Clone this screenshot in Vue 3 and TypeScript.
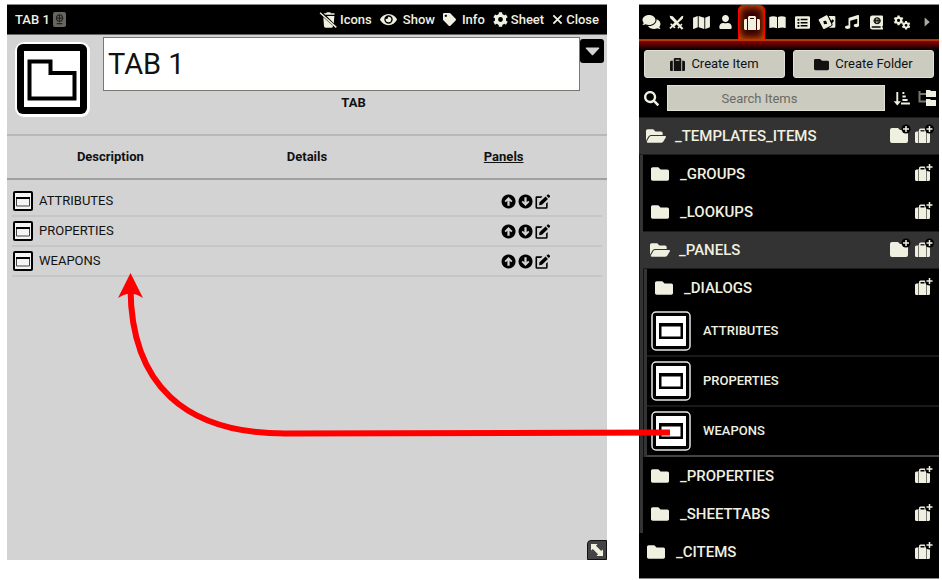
<script setup lang="ts">
import { h, ref, type FunctionalComponent } from 'vue'

interface Glyph {
  box: string
  d: string
  stroke?: number
}

const folder =
  'M464 128H272l-64-64H48C21.5 64 0 85.500 0 112v288c0 26.500 21.500 48 48 48h416c26.500 0 48-21.500 48-48V176c0-26.500-21.500-48-48-48z'

/* Outline of a cog wheel centred on cx, cy, with a round hole in the middle. */
function cog(cx: number, cy: number, r: number, teeth: number): string {
  const points: string[] = []
  const step = (Math.PI * 2) / teeth
  for (let i = 0; i < teeth; i++) {
    const a = i * step - Math.PI / 2
    const marks: [number, number][] = [
      [-0.3, 0.76],
      [-0.22, 1],
      [0.22, 1],
      [0.3, 0.76],
    ]
    for (const [offset, scale] of marks) {
      const t = a + offset * step
      points.push(`${(cx + Math.cos(t) * r * scale).toFixed(1)} ${(cy + Math.sin(t) * r * scale).toFixed(1)}`)
    }
  }
  const k = r * 0.32
  return `M${points.join('L')}ZM${cx - k} ${cy}a${k} ${k} 0 1 0 ${2 * k} 0a${k} ${k} 0 1 0 ${-2 * k} 0z`
}

const glyphs: Record<string, Glyph> = {
  folder: { box: '0 0 512 512', d: folder },
  folderOpen: {
    box: '0 0 576 512',
    d: 'M572.7 292.100L500.300 416.200A64 64 0 0 1 445 448H45c-18.500 0-30-20.100-20.700-36.100l72.400-124.100A64 64 0 0 1 152 256h400c18.500 0 30 20.100 20.700 36.100zM152 224h328v-48c0-26.500-21.500-48-48-48H272l-64-64H48C21.500 64 0 85.500 0 112v278l69-118.400C86.200 242.300 118 224 152 224z',
  },
  suitcase: {
    box: '0 0 512 512',
    d: 'M128 480h256V80c0-26.500-21.500-48-48-48H176c-26.500 0-48 21.500-48 48v400zm64-384h128v32H192V96zm320 80v256c0 26.500-21.500 48-48 48h-48V128h48c26.500 0 48 21.500 48 48zM96 480H48c-26.500 0-48-21.500-48-48V176c0-26.500 21.500-48 48-48h48v352z',
  },
  comments: {
    box: '0 0 576 512',
    d: 'M416 192c0-88.400-93.100-160-208-160S0 103.600 0 192c0 34.300 14.100 65.900 38 92-13.400 30.200-35.500 54.200-35.800 54.500-2.200 2.300-2.800 5.700-1.500 8.700S4.800 352 8 352c36.600 0 66.900-12.300 88.700-25 32.200 15.700 70.300 25 111.300 25 114.900 0 208-71.600 208-160zm122 220c23.900-26 38-57.700 38-92 0-66.900-53.500-124.200-129.300-148.100.9 6.600 1.300 13.300 1.300 20.100 0 105.900-107.700 192-240 192-10.800 0-21.300-.8-31.700-1.900C207.800 439.600 281.800 480 368 480c41 0 79.100-9.200 111.300-25 21.800 12.700 52.100 25 88.700 25 3.200 0 6.100-1.900 7.300-4.800 1.300-2.900.7-6.300-1.500-8.700-.3-.3-22.400-24.200-35.800-54.500z',
  },
  swords: {
    box: '0 0 24 24',
    d: 'M1 1l5 1 7 7.500 7-7.500 3-1-1 5-7.300 6.500 3.300 3.200 2-2 1.500 1.500-2 2.300 3.500 3.500-2.500 2.500-3.500-3.500-2.200 2-1.500-1.500 2-2-3.300-3.300-3.300 3.300 2 2L8.200 21 6 19l-3.500 3.500L.5 20.500 4 17l-2-2.300L3.500 13.200l2 2L9 12 2 5z',
  },
  map: {
    box: '0 0 576 512',
    d: 'M0 117.700v346.300c0 11.300 11.400 19 22 14.800L160 416V32L20.100 88A32 32 0 0 0 0 117.700zM192 416l192 64V96L192 32v384zM554 33.200L416 96v384l139.900-56A32 32 0 0 0 576 394.300V48c0-11.300-11.400-19-22-14.800z',
  },
  user: {
    box: '0 0 448 512',
    d: 'M224 256c70.700 0 128-57.300 128-128S294.700 0 224 0 96 57.300 96 128s57.300 128 128 128zm89.600 32h-16.700c-22.200 10.200-46.900 16-72.900 16s-50.600-5.800-72.900-16h-16.700C60.200 288 0 348.200 0 422.400V464c0 26.500 21.500 48 48 48h352c26.500 0 48-21.500 48-48v-41.600c0-74.200-60.200-134.400-134.400-134.400z',
  },
  book: {
    box: '0 0 24 22',
    d: 'M0 3q6-2.500 11.300 0v16.500q-5-2.300-11.300-.5zM12.700 3q5.300-2.500 11.300 0v16q-6-1.800-11.300.5z',
  },
  list: {
    box: '0 0 24 24',
    d: 'M2 2h20q2 0 2 2v16q0 2-2 2H2q-2 0-2-2V4q0-2 2-2zM4 6v3h3V6zM9 6v2.500h11V6zM4 11v3h3v-3zM9 11v2.500h11V11zM4 16v3h3v-3zM9 16v2.500h11V16z',
  },
  cards: {
    box: '0 0 26 24',
    d: 'M1 8L12 2q1-.5 1.700.5l6 13q.5 1-.5 1.600L9 22.500q-1 .5-1.600-.5L.6 9.500Q0 8.500 1 8zM7.500 10.500l1 5 5-1-2-4.500zM15.500 3H24q1.500 0 1.500 1.500V19q0 1.500-1.500 1.500h-8l4-2.500q2-1 1.300-2.700l-.6-1.300 3-4-2.700-2-1.500 2z',
  },
  music: {
    box: '0 0 512 512',
    d: 'M470.400 1.500L150.400 96A32 32 0 0 0 128 126.500v261.400A139 139 0 0 0 96 384c-53 0-96 28.700-96 64s43 64 96 64 96-28.700 96-64V214.300l256-75v184.600a138 138 0 0 0-32-3.900c-53 0-96 28.700-96 64s43 64 96 64 96-28.700 96-64V32a32 32 0 0 0-41.600-30.500z',
  },
  atlas: {
    box: '0 0 22 24',
    d: 'M4 0h16q2 0 2 2v14.500q0 1-1 1.500v3h1v3H4q-4 0-4-4V4q0-4 4-4zM4 18.500q-1.500 0-1.500 1.200T4 21h14v-2.500zM12 3a6 6 0 1 0 .1 0zM11.300 4.500v3.700H9.500q.3-2.700 1.800-3.700zM12.700 4.500q1.500 1 1.800 3.700h-1.800zM8 6v2.200H7.300zM16 6l.7 2.200H16zM7.300 9.700H8V12zM9.500 9.700h1.800v3.800q-1.500-1-1.800-3.800zM12.700 9.700h1.800q-.3 2.800-1.800 3.800zM16 9.700h.7L16 12z',
  },
  globe: {
    box: '0 0 12 12',
    d: 'M6 1a3.500 3.500 0 1 0 .1 0zM2.500 4.500h7M6 1v7M3 10.500h6',
    stroke: 1.2,
  },
  cogs: { box: '0 0 28 24', d: cog(8.5, 8.5, 8, 6) + cog(20.5, 16.5, 7, 6) },
  cog: { box: '0 0 24 24', d: cog(12, 12, 12, 6) },
  caret: { box: '0 0 10 16', d: 'M1 1.500v13q.3 1 1.200.3L9 8.500q.5-.5 0-1L2.200 1.200Q1.300.5 1 1.500z' },
  caretDown: { box: '0 0 16 10', d: 'M1 .5h14q1 .3.400 1.200L8.700 9q-.7.600-1.400 0L.6 1.700Q0 .8 1 .5z' },
  search: {
    box: '0 0 512 512',
    d: 'M505 442.700L405.300 343c-4.500-4.500-10.600-7-17-7H372c27.600-35.300 44-79.700 44-128C416 93.100 322.900 0 208 0S0 93.100 0 208s93.100 208 208 208c48.300 0 92.700-16.400 128-44v16.300c0 6.400 2.500 12.500 7 17l99.700 99.700c9.400 9.400 24.600 9.400 33.900 0l28.300-28.300c9.400-9.400 9.400-24.600.1-34zM208 336c-70.700 0-128-57.200-128-128 0-70.700 57.200-128 128-128 70.700 0 128 57.200 128 128 0 70.700-57.200 128-128 128z',
  },
  sort: {
    box: '0 0 18 16',
    d: 'M3.500 1h2v10h2.800L4.500 15.500.7 11h2.800zM10 1h2v2.300h-2zM10 4.800h3.500V7H10zM10 8.500h5.500v2.200H10zM8.500 12.200H18v2.300H8.500z',
  },
  tree: {
    box: '0 0 18 16',
    d: 'M8 0h4l1 1h5v6H8zM8 9h4l1 1h5v6H8z',
  },
  eye: {
    box: '0 0 576 512',
    d: 'M572.500 241.400C518.300 135.600 410.900 64 288 64S57.700 135.600 3.500 241.400a32 32 0 0 0 0 29.200C57.700 376.400 165.100 448 288 448s230.300-71.600 284.500-177.400a32 32 0 0 0 0-29.200zM288 400a144 144 0 1 1 144-144 144 144 0 0 1-144 144zm0-240a95 95 0 0 0-25.300 3.800 48 48 0 0 1-66.900 66.900A96 96 0 1 0 288 160z',
  },
  tag: {
    box: '0 0 512 512',
    d: 'M0 252.100V48C0 21.500 21.500 0 48 0h204.100a48 48 0 0 1 34 14l211.800 212c18.700 18.700 18.700 49 0 67.800L293.800 498c-18.700 18.700-49 18.700-67.900 0L14 286A48 48 0 0 1 0 252.100zM112 64c-26.500 0-48 21.500-48 48s21.500 48 48 48 48-21.500 48-48-21.500-48-48-48z',
  },
  trashOff: {
    box: '0 0 18 16',
    d: 'M.6 1.200L1.500.2 17.800 14.800l-1 1.200zM4.500 1.200H7L8 .3h3l1 .9h3.500v1.500H6.200zM7.700 4h7.700l-.6 7.200zM4.300 5.200l9.800 8.900q-.3 1.600-1.500 1.600H6.500q-1.300 0-1.500-1.400z',
  },
  close: { box: '0 0 12 12', d: 'M1.500 1.500l9 9M10.500 1.500l-9 9', stroke: 2 },
  up: {
    box: '0 0 16 16',
    d: 'M8 .5a7.500 7.500 0 1 0 .1 0zM8 3.200l4.200 4.300-1.300 1.300-1.700-1.600V12.500H6.800V7.200L5.100 8.800 3.800 7.500z',
  },
  down: {
    box: '0 0 16 16',
    d: 'M8 .5a7.500 7.500 0 1 0 .1 0zM8 12.800L3.800 8.500l1.300-1.300 1.700 1.600V3.500h2.400v5.300l1.700-1.600 1.300 1.300z',
  },
  edit: {
    box: '0 0 16 16',
    d: 'M1.500 2.500H8L6.500 4.200H2.200v10h9.600V10l1.700-1.500V14q0 1.700-1.700 1.700H2.200Q.5 15.700.5 14V4q0-1.500 1-1.500zM11.300 2.700l2.500 2.500-6.400 6.300-3 .4.400-3zM12.200 1.800l1.100-1.100q.8-.7 1.500 0l1 1q.7.800 0 1.500l-1.100 1.100z',
  },
  resize: { box: '0 0 12 12', d: 'M0 0h6.500L5 1.800 10.200 7 12 5.500V12H5.500L7 10.200 1.800 5 0 6.500z' },
}

const Icon: FunctionalComponent<{ name: string; w: number; h: number }> = (props) => {
  const glyph = glyphs[props.name]
  const line = glyph.stroke !== undefined
  return h('svg', { viewBox: glyph.box, width: props.w, height: props.h, 'aria-hidden': 'true' }, [
    h('path', {
      d: glyph.d,
      'fill-rule': 'evenodd',
      fill: line ? 'none' : 'currentColor',
      stroke: line ? 'currentColor' : 'none',
      'stroke-width': glyph.stroke,
    }),
  ])
}
Icon.props = ['name', 'w', 'h']

const windowActions = [
  { label: 'Icons', icon: 'trashOff', w: 18, h: 16, roomy: false },
  { label: 'Show', icon: 'eye', w: 17, h: 15, roomy: true },
  { label: 'Info', icon: 'tag', w: 13, h: 13, roomy: true },
  { label: 'Sheet', icon: 'cog', w: 15, h: 15, roomy: false },
  { label: 'Close', icon: 'close', w: 11, h: 11, roomy: false },
]

const sheetTabs = ['Description', 'Details', 'Panels']
const activeSheetTab = ref('Panels')
const panels = ['ATTRIBUTES', 'PROPERTIES', 'WEAPONS']

const sidebarTabs = [
  { label: 'Chat', icon: 'comments', w: 19, h: 16 },
  { label: 'Combat', icon: 'swords', w: 15, h: 15 },
  { label: 'Scenes', icon: 'map', w: 17, h: 15 },
  { label: 'Actors', icon: 'user', w: 13, h: 14 },
  { label: 'Items', icon: 'suitcase', w: 16, h: 16 },
  { label: 'Journal', icon: 'book', w: 17, h: 15 },
  { label: 'Tables', icon: 'list', w: 15, h: 15 },
  { label: 'Cards', icon: 'cards', w: 18, h: 16 },
  { label: 'Playlists', icon: 'music', w: 14, h: 14 },
  { label: 'Compendium', icon: 'atlas', w: 13, h: 15 },
  { label: 'Settings', icon: 'cogs', w: 18, h: 15 },
  { label: 'Collapse', icon: 'caret', w: 6, h: 10 },
]
const activeSidebarTab = ref('Items')

interface Row {
  name: string
  depth: number
  kind: 'open' | 'closed' | 'item'
  last?: boolean
}
const rows: Row[] = [
  { name: '_TEMPLATES_ITEMS', depth: 0, kind: 'open' },
  { name: '_GROUPS', depth: 1, kind: 'closed' },
  { name: '_LOOKUPS', depth: 1, kind: 'closed' },
  { name: '_PANELS', depth: 1, kind: 'open' },
  { name: '_DIALOGS', depth: 2, kind: 'closed' },
  { name: 'ATTRIBUTES', depth: 2, kind: 'item' },
  { name: 'PROPERTIES', depth: 2, kind: 'item' },
  { name: 'WEAPONS', depth: 2, kind: 'item', last: true },
  { name: '_PROPERTIES', depth: 1, kind: 'closed' },
  { name: '_SHEETTABS', depth: 1, kind: 'closed' },
  { name: '_CITEMS', depth: 0, kind: 'closed' },
]
</script>

<template>
  <main class="page">
    <section class="sheet" aria-label="TAB 1">
      <header class="titlebar">
        <h1 class="title">TAB 1</h1>
        <span class="badge"><Icon name="globe" :w="11" :h="11" /></span>
        <nav class="window-actions">
          <button
            v-for="a in windowActions"
            :key="a.label"
            type="button"
            class="window-action"
            :class="{ roomy: a.roomy }"
          >
            <Icon :name="a.icon" :w="a.w" :h="a.h" />{{ a.label }}
          </button>
        </nav>
      </header>

      <div class="identity">
        <svg class="portrait" viewBox="0 0 75 75" aria-hidden="true">
          <rect width="75" height="75" rx="9" fill="#fff" />
          <rect x="2" y="2" width="70" height="70" rx="6" fill="#000" />
          <rect x="9" y="9" width="56" height="56" fill="#fff" />
          <path d="M14.500 19.500h21v11.500h24v25.500h-45z" fill="#fff" stroke="#000" stroke-width="4" />
        </svg>
        <div class="naming">
          <div class="name-line">
            <input class="name" value="TAB 1" aria-label="Name" />
            <button type="button" class="drop" aria-label="Options"><Icon name="caretDown" :w="15" :h="9" /></button>
          </div>
          <p class="type">TAB</p>
        </div>
      </div>

      <nav class="tabs">
        <button
          v-for="t in sheetTabs"
          :key="t"
          type="button"
          class="tab"
          @click="activeSheetTab = t"
        >
          <span :class="{ current: activeSheetTab === t }">{{ t }}</span>
        </button>
      </nav>

      <ul class="panels">
        <li v-for="p in panels" :key="p" class="panel">
          <svg class="panel-icon" viewBox="0 0 20 20" aria-hidden="true">
            <rect x="1" y="1" width="18" height="18" rx="1" fill="#f4f4f4" stroke="#000" stroke-width="2" />
            <path d="M3.500 7v8h13V7" fill="#f4f4f4" stroke="#444" />
            <path d="M3 7h14" stroke="#000" stroke-width="2" />
          </svg>
          <span class="panel-name">{{ p }}</span>
          <span class="panel-actions">
            <button type="button" :aria-label="`Move ${p} up`"><Icon name="up" :w="15" :h="15" /></button>
            <button type="button" :aria-label="`Move ${p} down`"><Icon name="down" :w="15" :h="15" /></button>
            <button type="button" :aria-label="`Edit ${p}`"><Icon name="edit" :w="15" :h="15" /></button>
          </span>
        </li>
      </ul>

      <button type="button" class="resize" aria-label="Resize"><Icon name="resize" :w="12" :h="12" /></button>
    </section>

    <aside class="sidebar">
      <nav class="side-tabs">
        <button
          v-for="t in sidebarTabs"
          :key="t.label"
          type="button"
          class="side-tab"
          :class="{ active: activeSidebarTab === t.label }"
          :aria-label="t.label"
          @click="activeSidebarTab = t.label"
        >
          <Icon :name="t.icon" :w="t.w" :h="t.h" />
        </button>
      </nav>

      <div class="create">
        <button type="button"><Icon name="suitcase" :w="15" :h="15" />Create Item</button>
        <button type="button"><Icon name="folder" :w="15" :h="15" />Create Folder</button>
      </div>

      <div class="find">
        <Icon name="search" :w="15" :h="15" />
        <input type="search" class="search" placeholder="Search Items" aria-label="Search Items" />
        <button type="button" aria-label="Sort"><Icon name="sort" :w="17" :h="15" /></button>
        <button type="button" aria-label="Collapse folders">
          <svg width="18" height="16" viewBox="0 0 18 16" aria-hidden="true">
            <path d="M1.500 1v10.500H8M1.500 4H8" fill="none" stroke="#77776f" stroke-width="2" />
            <path :d="glyphs.tree.d" fill="currentColor" />
          </svg>
        </button>
      </div>

      <ul class="directory">
        <li v-for="r in rows" :key="r.depth + r.name" class="entry">
          <span v-for="n in r.depth" :key="n" class="rail"></span>
          <div class="row" :class="[r.kind, { last: r.last }]">
            <template v-if="r.kind === 'item'">
              <svg class="thumb" viewBox="0 0 40 40" aria-hidden="true">
                <rect x="1" y="1" width="38" height="38" rx="4" fill="#000" stroke="#e8e8e8" stroke-width="1.500" />
                <rect x="5" y="5" width="30" height="30" fill="#fff" />
                <path d="M8 12h24v16H8zM10.500 15.500v10h19v-10z" fill="#000" fill-rule="evenodd" />
              </svg>
              <a href="#" class="item-name">{{ r.name }}</a>
            </template>
            <template v-else>
              <span class="folder-icon">
                <Icon v-if="r.kind === 'open'" name="folderOpen" :w="20" :h="18" />
                <Icon v-else name="folder" :w="18" :h="18" />
              </span>
              <h2 class="folder-name">{{ r.name }}</h2>
              <button v-if="r.kind === 'open'" type="button" class="add" aria-label="Create folder">
                <svg width="22" height="20" viewBox="0 0 22 20" aria-hidden="true">
                  <path d="M3 4h6l2 2h6q2 0 2 2v9q0 2-2 2H3q-2 0-2-2V6q0-2 2-2z" fill="currentColor" />
                  <circle cx="17" cy="5" r="4.500" fill="#000" />
                  <path d="M17 2v6M14 5h6" stroke="currentColor" stroke-width="1.500" />
                </svg>
              </button>
              <button type="button" class="add" aria-label="Create item">
                <svg width="20" height="20" viewBox="0 0 20 20" aria-hidden="true">
                  <path
                    d="M2.500 7.500H5V6q0-1.500 1.500-1.500h4Q12 4.500 12 6v1.500h2.500Q16 7.500 16 9v8.500q0 1.500-1.500 1.500h-12Q1 19 1 17.500V9q0-1.500 1.500-1.500zM6.500 6v1.500h4V6z"
                    fill="currentColor"
                    fill-rule="evenodd"
                  />
                  <path d="M4.500 8v11M12.500 8v11" stroke="#77776f" />
                  <circle cx="15.500" cy="5" r="4.500" fill="#000" />
                  <path d="M15.500 2v6M12.500 5h6" stroke="currentColor" stroke-width="1.500" />
                </svg>
              </button>
            </template>
          </div>
        </li>
      </ul>
    </aside>

    <svg class="link" viewBox="0 0 942 580" preserveAspectRatio="none" aria-hidden="true">
      <path d="M130.500 288C131 385 185 433.500 285 433.500L670 432.500" fill="none" stroke="#f00" stroke-width="6" />
      <path d="M130.500 273l12.500 25q-12.500-8.500-25 0z" fill="#f00" />
    </svg>
  </main>
</template>

<style>
body {
  background: #fff;
}
</style>

<style scoped>
* {
  box-sizing: border-box;
}

.page {
  position: relative;
  display: flex;
  gap: 32px;
  min-height: 100vh;
  padding: 4px 3px 1px 7px;
  font-family: Roboto, 'Noto Sans', sans-serif;
  font-size: 13px;
  line-height: 18px;
}

svg {
  display: block;
  flex: none;
}

button {
  display: flex;
  align-items: center;
  justify-content: center;
  padding: 0;
  border: 0;
  background: none;
  color: inherit;
  font: inherit;
  cursor: pointer;
}

ul {
  margin: 0;
  padding: 0;
  list-style: none;
}

.sheet {
  position: relative;
  flex: 2 1 0;
  min-width: 0;
  margin-bottom: 19px;
  border-top: 1px solid #888;
  background: #d3d3d3;
  color: #111;
}

.titlebar {
  display: flex;
  align-items: center;
  height: 30px;
  padding: 0 8px;
  border-bottom: 1px solid #666;
  background: #000;
  color: #f0f0e0;
  font-weight: 500;
}

.title {
  margin: 0;
  font-size: 13px;
  font-weight: 500;
}

.badge {
  display: flex;
  justify-content: center;
  margin-left: 3px;
  padding: 2px 0;
  width: 13px;
  border-radius: 2px;
  background: #66665f;
  color: #22221f;
}

.window-actions {
  display: flex;
  gap: 8px;
  margin-left: auto;
}

.window-action {
  gap: 3px;
}

.window-action.roomy {
  gap: 6px;
}

.identity {
  display: flex;
  gap: 13px;
  height: 99px;
  padding: 2px 3px 0 8px;
}

.portrait {
  width: 75px;
  height: 75px;
  margin-top: 5px;
}

.naming {
  flex: 1;
  min-width: 0;
}

.name-line {
  display: flex;
  align-items: flex-start;
}

.name {
  flex: 1;
  min-width: 0;
  height: 54px;
  padding: 0 4px;
  border: 1px solid #7a7971;
  background: #fff;
  color: #111;
  font: 29px Roboto, sans-serif;
}

.drop {
  width: 24px;
  height: 24px;
  margin-top: 2px;
  border-radius: 3px;
  background: #000;
  color: #d3d3d3;
}

.type {
  margin: 3px 0 0;
  font-weight: 700;
  text-align: center;
}

.tabs {
  display: grid;
  grid-template-columns: repeat(3, 1fr);
  height: 46px;
  padding: 0 5px;
  border-top: 2px solid #b8b8b8;
  border-bottom: 2px solid #a0a0a0;
}

.tab {
  font-weight: 700;
}

.current {
  text-decoration: underline;
}

.panels {
  padding: 7px 5px 0;
}

.panel {
  display: flex;
  align-items: center;
  height: 30px;
  border-bottom: 2px solid #c6c6c6;
}

.panel-icon {
  width: 20px;
  height: 20px;
  margin-left: 1px;
}

.panel-name {
  flex: 1;
  padding-left: 6px;
}

.panel-actions {
  display: flex;
  gap: 2px;
  margin-right: 52px;
  color: #000;
}

.resize {
  position: absolute;
  right: 0;
  bottom: 0;
  width: 20px;
  height: 20px;
  border: 1px solid #111;
  border-radius: 4px 0 0 0;
  background: #444;
  color: #f0f0e0;
}

.sidebar {
  flex: 1 1 0;
  min-width: 0;
  border-top: 1px solid #888;
  border-bottom: 1px solid #888;
  background: #000;
  color: #f0f0e0;
}

.side-tabs {
  display: flex;
  height: 36px;
  border-bottom: 2px solid #b23a00;
}

.side-tab {
  flex: 1;
}

.side-tab:last-child {
  color: #aaaaa0;
}

.side-tab.active {
  border: 1px solid #f00;
  border-bottom: 0;
  border-radius: 5px 5px 0 0;
  box-shadow: inset 0 0 8px #ff6400;
  background: #300;
}

.create {
  display: grid;
  grid-template-columns: 1fr 1fr;
  gap: 8px;
  padding: 9px 5px 7px;
  background: linear-gradient(#900000, #000 9px);
}

.create button {
  gap: 6px;
  height: 28px;
  border: 1px solid #e0e0d4;
  border-radius: 3px;
  background: #cbcbc0;
  color: #111;
}

.find {
  display: flex;
  align-items: center;
  gap: 8px;
  padding: 0 3px 6px 5px;
}

.search {
  flex: 1;
  min-width: 0;
  height: 26px;
  padding: 0 20px 0 0;
  border: 1px solid #e0e0d4;
  background: #cbcbc0;
  font: inherit;
  text-align: center;
}

.search::placeholder {
  color: #6a6a65;
}

.entry {
  display: flex;
}

.rail {
  flex: none;
  width: 4px;
  border-left: 1px solid #111;
  background: #333;
}

.row {
  display: flex;
  align-items: center;
  flex: 1;
  gap: 3px;
  min-width: 0;
  height: 38px;
  padding-right: 5px;
  padding-left: 7px;
}

.row.closed {
  padding-left: 8px;
}

.row.open {
  border-top: 1px solid #1c1c1c;
  border-bottom: 1px solid #1c1c1c;
  background: #333;
}

.row.item {
  height: 50px;
  padding-left: 4px;
  border-bottom: 2px solid #191919;
}

.row.last {
  border-bottom-color: #444;
}

.thumb {
  width: 40px;
  height: 40px;
}

.item-name {
  padding-left: 9px;
  color: inherit;
  font-weight: 500;
  text-decoration: none;
}

.folder-icon {
  flex: none;
  width: 20px;
}

.folder-name {
  flex: 1;
  margin: 0;
  padding-left: 6px;
  font-size: 15px;
  font-weight: 500;
}

.add {
  margin-bottom: 4px;
}

.link {
  position: absolute;
  top: 0;
  left: 0;
  width: 100%;
  height: 100%;
  pointer-events: none;
}
</style>
